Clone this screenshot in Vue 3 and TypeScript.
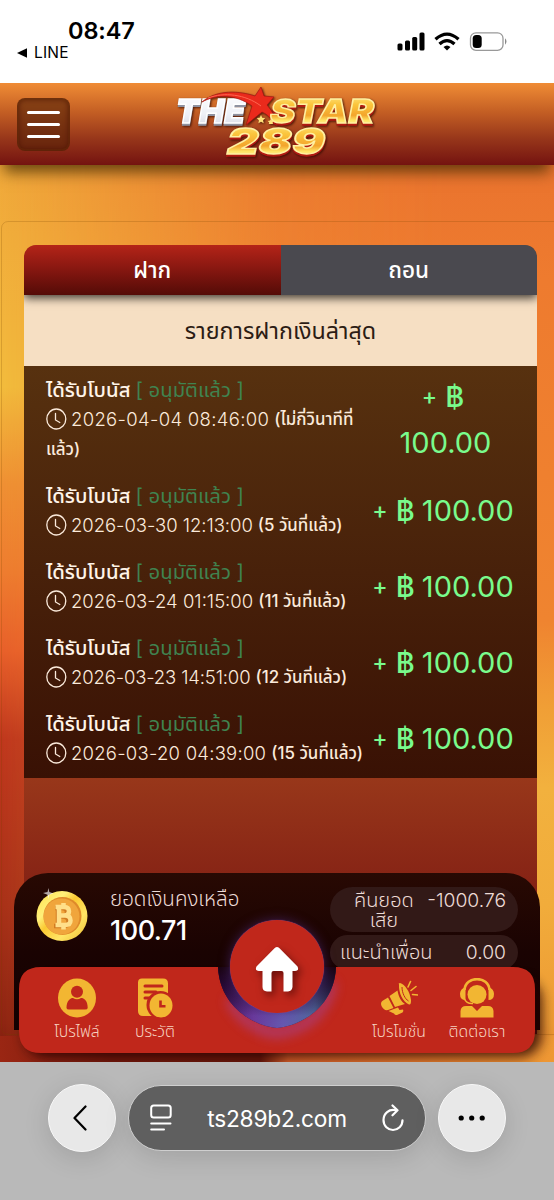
<script setup lang="ts">
interface Deposit {
  stamp: string
  tracking: number
  ago: string
  agoRest?: string
}

const deposits: Deposit[] = [
  { stamp: '2026-04-04 08:46:00', tracking: 0.32, ago: '(ไม่กี่วินาทีที่', agoRest: 'แล้ว)' },
  { stamp: '2026-03-30 12:13:00', tracking: -0.05, ago: '(5 วันที่แล้ว)' },
  { stamp: '2026-03-24 01:15:00', tracking: 0, ago: '(11 วันที่แล้ว)' },
  { stamp: '2026-03-23 14:51:00', tracking: -0.15, ago: '(12 วันที่แล้ว)' },
  { stamp: '2026-03-20 04:39:00', tracking: 0.24, ago: '(15 วันที่แล้ว)' },
]
</script>

<template>
  <div class="phone" lang="th">
    <header class="status">
      <div class="status-left">
        <div class="clock">08:47</div>
        <div class="back-app">
          <svg width="11" height="10" viewBox="0 0 11 10"><path d="M0 5 L10 .3 V9.7 Z" fill="#000" /></svg>
          <span>LINE</span>
        </div>
      </div>
      <svg class="status-icons" width="112" height="22" viewBox="0 0 112 22">
        <rect x="0.500" y="12.500" width="5" height="7" rx="1.500" />
        <rect x="8" y="9.500" width="5" height="10" rx="1.500" />
        <rect x="15.200" y="6" width="5" height="13.500" rx="1.500" />
        <rect x="22.500" y="1.500" width="5" height="18" rx="1.500" />
        <g fill="none" stroke="#000" stroke-width="3.300">
          <path d="M38.500 8.300 Q50 -2 61.500 8.300" />
          <path d="M42.500 13 Q50 6.200 57.500 13" />
        </g>
        <path d="M46.500 16 Q50 13 53.500 16 L50 19.500 Z" />
        <rect x="73.500" y="1.800" width="32.500" height="17.600" rx="5.500" fill="none" stroke="#999" stroke-width="1.300" />
        <rect x="75.700" y="4" width="9" height="13" rx="3.500" />
        <path d="M108 7.300 Q111 10.500 108 13.700 Z" fill="#888" />
      </svg>
    </header>

    <main class="site">
      <div class="backdrop"><div class="backdrop-right"></div><div class="backdrop-floor"></div></div>

      <nav class="topbar">
        <button class="burger" aria-label="menu"><i></i><i></i><i></i></button>
        <svg class="logo" width="210" height="76" viewBox="0 0 210 76">
          <defs>
            <linearGradient id="gold" x1="0" y1="0" x2="0" y2="1">
              <stop offset="0" stop-color="#fff3a0" />
              <stop offset=".35" stop-color="#fbc53c" />
              <stop offset=".62" stop-color="#f3a52c" />
              <stop offset=".75" stop-color="#ffe566" />
              <stop offset="1" stop-color="#fffbd8" />
            </linearGradient>
            <linearGradient id="silver" x1="0" y1="0" x2="0" y2="1">
              <stop offset="0" stop-color="#fff" />
              <stop offset=".6" stop-color="#eef0f6" />
              <stop offset="1" stop-color="#d3d6e0" />
            </linearGradient>
          </defs>
          <g class="logo-text">
            <text class="steel" x="3" y="36.500" font-size="33" textLength="69" lengthAdjust="spacingAndGlyphs">THE</text>
            <path d="M29 16 C44 3 67 5 82 10 L88 1 L91 10 L101 11 L94 19 C99 25 103 31 104 40 C99 33 94 28 89 26 L73 39 L79 20 C63 8 43 8 29 16 Z" fill="#ea2a1c" stroke="#a41712" stroke-width=".7" />
            <path d="M35 12 C51 6 72 8 88 20" fill="none" stroke="#ff6650" stroke-width="1" />
            <text class="golden" x="97" y="36.500" font-size="33" textLength="104" lengthAdjust="spacingAndGlyphs">STAR</text>
            <text class="golden" x="54" y="67.500" font-size="36" textLength="98" lengthAdjust="spacingAndGlyphs">289</text>
            <path d="M88 29 l1.300 2.700 3 .4 -2.200 2.100 .6 3 -2.700-1.500 -2.600 1.500 .5-3 -2.200-2.100 3-.4Z M98 32.500 l1 2 2.300 .4 -1.700 1.500 .4 1.600 h-4.300 l.5-1.600 -1.500-1.500 2.300-.4Z" fill="#ffe27a" />
          </g>
        </svg>
      </nav>

      <section class="frame">
        <div class="card">
          <div class="tabs">
            <button class="tab active"><span>ฝาก</span></button>
            <button class="tab"><span>ถอน</span></button>
          </div>
          <h2 class="title"><span>รายการฝากเงินล่าสุด</span></h2>
          <ul class="list">
            <li v-for="d in deposits" :key="d.stamp" class="row">
              <div class="info">
                <div class="line head">
                  <span class="kind">ได้รับโบนัส</span>
                  <span class="state">[ อนุมัติแล้ว ]</span>
                </div>
                <div class="line when">
                  <svg class="clock-icon" width="21" height="22" viewBox="0 0 21 22" fill="none" stroke="#fbeadb" stroke-width="1.300" stroke-linecap="round">
                    <ellipse cx="10.300" cy="11" rx="9.500" ry="10" />
                    <path d="M9.500 5.500 V12 L13.800 14.500" />
                  </svg>
                  <span class="stamp" :style="{ letterSpacing: d.tracking + 'px' }">{{ d.stamp }}</span>
                  <span class="ago">{{ d.ago }}</span>
                </div>
                <div v-if="d.agoRest" class="line"><span class="ago">{{ d.agoRest }}</span></div>
              </div>
              <div class="amount" :class="{ stacked: d.agoRest }">
                <span class="sign"><small>+</small> <b>฿</b></span>
                <span class="sum">100.00</span>
              </div>
            </li>
          </ul>
        </div>
      </section>

      <aside class="dock">
        <div class="wallet">
          <svg class="coin" width="54" height="54" viewBox="0 0 54 54">
            <defs>
              <linearGradient id="rim" x1="0" y1="0" x2="1" y2="1">
                <stop offset="0" stop-color="#ffe04a" />
                <stop offset=".3" stop-color="#fff07a" />
                <stop offset=".45" stop-color="#fbc932" />
                <stop offset=".7" stop-color="#ffe566" />
                <stop offset="1" stop-color="#eebb2c" />
              </linearGradient>
            </defs>
            <ellipse cx="27" cy="28" rx="25.500" ry="25" fill="url(#rim)" />
            <circle cx="27.500" cy="28" r="19" fill="#df8a2a" />
            <circle cx="26.500" cy="28.500" r="18" fill="#f0a53c" />
            <g fill="none" stroke="#d27c22" stroke-width="4.500" transform="translate(-2 1)">
              <path d="M22 19 H29 Q34 19 34 23.300 Q34 27.500 29 27.500 H24 H30 Q35.500 27.500 35.500 32.500 Q35.500 37 30 37 H21 M25 19 V37" />
            </g>
            <g fill="none" stroke="#ffdf8a" stroke-width="4.500">
              <path d="M20.500 19 H29 Q34 19 34 23.300 Q34 27.500 29 27.500 H24 H30 Q35.500 27.500 35.500 32.500 Q35.500 37 30 37 H20.500 M24 19 V37" />
              <path d="M28.500 15 V18 M28.500 38 V41.500" />
            </g>
            <path d="M13.500 0 L14.300 4 L18.500 5.500 L14.300 6.800 L13.500 11 L12.500 6.800 L8 5 L12.500 4 Z" fill="#fff" opacity=".65" />
          </svg>
          <div class="balance">
            <span>ยอดเงินคงเหลือ</span>
            <strong>100.71</strong>
          </div>
          <div class="pills">
            <div class="pill tall">
              <span class="pill-name">คืนยอด<br />เสีย</span>
              <span class="pill-num">-1000.76</span>
            </div>
            <div class="pill">
              <span class="pill-name">แนะนำเพื่อน</span>
              <span class="pill-num">0.00</span>
            </div>
          </div>
        </div>

        <div class="menu">
          <svg class="menu-shape" width="554" height="108" viewBox="0 0 554 108">
            <defs>
              <linearGradient id="glow" x1="0" y1="0" x2="1" y2="0">
                <stop offset="0" stop-color="#3b1256" />
                <stop offset=".3" stop-color="#6a3a9c" />
                <stop offset=".55" stop-color="#6659b0" />
                <stop offset=".82" stop-color="#50669c" />
                <stop offset="1" stop-color="#2c2a50" />
              </linearGradient>
              <linearGradient id="notchfill" x1="0" y1="0" x2="0" y2="1">
                <stop offset="0" stop-color="#1a0410" />
                <stop offset=".3" stop-color="#1a0420" stop-opacity=".7" />
                <stop offset=".8" stop-color="#1a0420" stop-opacity="0" />
              </linearGradient>
              <filter id="soft" x="-40%" y="-40%" width="180%" height="180%"><feGaussianBlur stdDeviation="6" /></filter>
              <filter id="shade" x="-10%" y="-30%" width="120%" height="170%"><feGaussianBlur stdDeviation="6" /></filter>
              <clipPath id="inbar"><rect x="19" y="11" width="516" height="86" rx="22" /></clipPath>
            </defs>
            <rect x="24" y="22" width="518" height="79" rx="22" fill="#220400" opacity=".8" filter="url(#shade)" />
            <path d="M41 11 H218 C220 52 255 70 277 72 C300 70 334 52 336 11 H513 Q535 11 535 33 V75 Q535 97 513 97 H41 Q19 97 19 75 V33 Q19 11 41 11 Z" fill="#c0271b" />
            <g clip-path="url(#inbar)">
              <path d="M230 42 C240 64 256 74 277 77 C300 74 324 62 332 26" fill="none" stroke="#a04bb0" stroke-width="9" opacity=".6" filter="url(#soft)" />
            </g>
            <path d="M218 11 C220 52 255 70 277 72 C300 70 334 52 336 11 Z" fill="url(#glow)" />
            <path d="M218 11 C220 52 255 70 277 72 C300 70 334 52 336 11 Z" fill="url(#notchfill)" />
          </svg>
          <div class="items">
            <a class="item">
              <svg width="38" height="40" viewBox="0 0 38 40">
                <ellipse cx="19" cy="20" rx="19" ry="19.500" fill="#f2b632" />
                <circle cx="19" cy="13.700" r="6" fill="#c0271b" />
                <path d="M8.500 30 C8.500 22.500 12.500 20 15 20 Q19 22.500 23 20 C26 20 29.700 22.500 29.700 30 Q29.500 31.500 27 31.500 H11 Q8.700 31.500 8.500 30Z" fill="#c0271b" />
              </svg>
              <span>โปรไฟล์</span>
            </a>
            <a class="item">
              <svg width="38" height="40" viewBox="0 0 38 40">
                <path d="M6 .5 H27 Q32 .5 32 5.500 V17 H20 L17 33 L19 38 H7 Q2 38 2 33 V4.500 Q2 .5 6 .5Z" fill="#f2b632" />
                <path d="M9 8 H26 M9 14 H20 M9 20 H15" stroke="#c0271b" stroke-width="3" stroke-linecap="round" />
                <circle cx="24.500" cy="27" r="14" fill="#c0271b" />
                <ellipse cx="25" cy="27.500" rx="11.500" ry="12" fill="#f2b632" />
                <path d="M24.500 22.500 V28.300 H29.500" stroke="#c0271b" stroke-width="2.600" fill="none" />
              </svg>
              <span>ประวัติ</span>
            </a>
            <span class="gap"></span>
            <a class="item">
              <svg width="38" height="40" viewBox="0 0 38 40">
                <g fill="#f2b632">
                  <path d="M19 6.500 Q18 5 20 5 C25 6 30 14 31 22 Q31.200 27 29 26.500 C23 24 18.500 15 19 6.500Z" />
                  <path d="M17.500 12.500 C18.500 19 21.500 24 25 26 L15 29 L9.500 18 Z" />
                  <path d="M8 19.500 L13.500 30 L8 32 Q4 33 1.500 28 Q0 24 3 22.500 Z" />
                  <path d="M8.500 33 L18 29.500 L19.500 32 L23 31.500 Q24 33 22.500 34.500 L17 37 Q15 37.500 14 35.500 Z" />
                </g>
                <path d="M22 9 C22 15 25 21 28.500 23" stroke="#c0271b" stroke-width="1" fill="none" />
                <path d="M28 9 L30.500 3.500 M31 12.500 L36 8.500 M32.500 16.500 L38 17" stroke="#f2b632" stroke-width="1.600" stroke-linecap="round" />
              </svg>
              <span>โปรโมชั่น</span>
            </a>
            <a class="item">
              <svg width="38" height="40" viewBox="0 0 38 40">
                <circle cx="19" cy="16.500" r="9.500" fill="#f2b632" />
                <path d="M6.500 12 C7.500 -2.500 30.500 -2.500 31.500 12" fill="none" stroke="#f2b632" stroke-width="2.600" />
                <path d="M7.500 9 V22 Q2 22 2 16 Q2 11 7.500 9Z M30.500 9 V22 Q36 22 36 16 Q36 11 30.500 9Z" fill="#f2b632" />
                <path d="M6.500 21 Q8.500 26 15 25.500" stroke="#f2b632" stroke-width="1.500" fill="none" />
                <path d="M2.500 39.500 V33 Q3 28 8 28 H14 L19 33 L24 28 H30 Q35 28 35.500 33 V39.500 Z" fill="#f2b632" />
              </svg>
              <span>ติดต่อเรา</span>
            </a>
          </div>
        </div>

        <button class="home" aria-label="home">
          <svg width="44" height="46" viewBox="0 0 44 46">
            <path d="M20 1.800 Q22 0 24 1.800 L42.500 20.500 Q44.500 24.500 40 25 H37.500 V41 Q37 45 33 45.500 H28.500 V27 Q28.500 25 26.500 25 H18.500 Q16.500 25 16.500 27 V45.500 H12 Q7.500 45 7.500 41 V25 H4 Q-.5 24.500 1.500 20.500 Z" fill="#fff" />
          </svg>
        </button>
      </aside>
    </main>

    <footer class="browser">
      <button class="round" aria-label="back">
        <svg class="chevron" width="14" height="26" viewBox="0 0 14 26"><path d="M12.500 1.500 L1.500 13 L12.500 24.500" fill="none" stroke="#000" stroke-width="2.200" stroke-linecap="round" stroke-linejoin="round" /></svg>
      </button>
      <div class="address">
        <svg width="22" height="28" viewBox="0 0 22 28" fill="none" stroke="#fff" stroke-width="2" stroke-linecap="round">
          <rect x="1.200" y="1.500" width="19.500" height="12" rx="2.500" />
          <path d="M1.200 19.500 H20.500 M1.200 25.500 H14" />
        </svg>
        <span class="url">ts289b2.com</span>
        <svg width="22" height="28" viewBox="0 0 22 28" fill="none" stroke="#fff" stroke-width="2.200" stroke-linecap="round" stroke-linejoin="round">
          <path d="M14 6.300 C7 4.500 1.500 9.500 1.500 16 C1.500 22 6 26 11 26 C16 26 20.500 22 20.500 16.300" />
          <path d="M10.500 1.500 L15.500 6.300 L10.500 11.300" />
        </svg>
      </div>
      <button class="round" aria-label="more">
        <svg width="28" height="6" viewBox="0 0 28 6"><circle cx="3.200" cy="3" r="2.600" /><circle cx="13.700" cy="3" r="2.600" /><circle cx="24.200" cy="3" r="2.600" /></svg>
      </button>
    </footer>
  </div>
</template>

<style>
body {
  margin: 0;
  background: #fff;
}
</style>

<style scoped>
.phone {
  width: 554px;
  height: 1200px;
  overflow: hidden;
  display: flex;
  flex-direction: column;
  font-family: Inter, "Noto Sans Thai", sans-serif;
  background: #fff;
}
.phone span,
.phone strong {
  white-space: nowrap;
}
button {
  border: 0;
  padding: 0;
  font: inherit;
  color: inherit;
}

.status {
  height: 83px;
  box-sizing: border-box;
  padding: 18px 45px 0 17px;
  display: flex;
  justify-content: space-between;
}
.clock {
  font-size: 23.5px;
  line-height: 26px;
  font-weight: 600;
  padding-left: 51px;
  letter-spacing: -0.1px;
}
.back-app {
  display: flex;
  align-items: center;
  gap: 6px;
  font-size: 15.5px;
  line-height: 17px;
  letter-spacing: 0.2px;
}
.status-icons {
  margin-top: 13px;
}

.site {
  position: relative;
  height: 979px;
  flex: none;
  overflow: hidden;
}
.backdrop,
.backdrop-right {
  position: absolute;
  inset: 0;
}
.backdrop {
  background: linear-gradient(#f0a83a 8%, #f2b53c 24%, #f2bc3c 31%, #ef9033 41%, #ee7c2f 50%, #e8602a 58%, #bf371d 67%, #b6341b 74%, #a83018 84%, #8e2412 96%, #7a1c0d);
}
.backdrop-right {
  background: linear-gradient(#ea732e 8%, #ee7b2f 20%, #ef802f 40%, #ef8430 55%, #f09f36 64%, #f2b13e 72%, #f1ac3b 84%, #ee9a34 96%, #e8882e);
  mask-image: linear-gradient(to right, transparent, rgba(0, 0, 0, 0.85) 50%, #000 80%);
}
.backdrop-floor {
  position: absolute;
  inset: auto 0 0;
  height: 26px;
  background: linear-gradient(to right, #9a2613, #75190c 20%, #6a180b 47%, #d8612a 52%, #e67c2e 75%, #ee9834);
}

.topbar {
  position: relative;
  height: 82px;
  box-sizing: border-box;
  padding: 0 17px;
  display: flex;
  align-items: center;
  background: linear-gradient(#f08c35, #c45f24 35%, #97361a 68%, #741310);
  box-shadow: 0 11px 14px -4px rgba(60, 40, 0, 0.75);
}
.burger {
  width: 53px;
  height: 53px;
  border: 2px solid rgba(90, 35, 5, 0.55);
  border-radius: 8px;
  background: rgba(85, 35, 8, 0.62);
  box-shadow: inset 0 0 5px rgba(70, 15, 0, 0.6);
  display: flex;
  flex-direction: column;
  align-items: center;
  justify-content: center;
  gap: 9px;
}
.burger i {
  width: 33px;
  height: 3px;
  border-radius: 2px;
  background: #fff;
}
.logo {
  margin-left: 103px;
}
.logo-text {
  font-family: Inter, sans-serif;
  font-weight: 900;
  font-style: italic;
  filter: drop-shadow(1px 1px 1px rgba(50, 10, 0, 0.8));
}
.steel {
  fill: url(#silver);
  stroke: #fff;
  stroke-width: 1.4px;
  filter: drop-shadow(0 2px 0 #8f92a0);
}
.golden {
  fill: url(#gold);
  stroke: #fff0a0;
  stroke-width: 1.4px;
  filter: drop-shadow(0 2px 0 #b21a12);
}

.frame {
  position: relative;
  box-sizing: border-box;
  height: 814px;
  margin: 56px 0 0 1px;
  width: 570px;
  padding: 23px 0 0 22px;
  border: 1.5px solid rgba(120, 70, 0, 0.22);
  border-radius: 7px;
}
.card {
  width: 513px;
  height: 789px;
  border-radius: 12px 12px 0 0;
  background: linear-gradient(rgba(90, 45, 20, 0.3), #98371a 533px, #862315 640px, #741a10);
  overflow: hidden;
}
.tabs {
  position: relative;
  display: flex;
  height: 50px;
  box-shadow: 0 3px 9px rgba(0, 0, 0, 0.75);
}
.tab {
  flex: 1;
  padding-top: 2px;
  background: #4a494f;
  color: #fff;
  font-size: 22.5px;
  font-weight: 500;
}
.tab.active {
  background: linear-gradient(#b42418, #8a1811 45%, #540b07);
}
.title {
  margin: 0;
  height: 71px;
  background: #f6dfc3;
  color: #2c1c14;
  font-weight: 400;
  font-size: 23.3px;
  line-height: 72px;
  text-align: center;
}
.list {
  margin: 0;
  list-style: none;
  height: 412px;
  box-sizing: border-box;
  padding: 9px 20px 0 22px;
  display: flex;
  flex-direction: column;
  gap: 17px;
  background: linear-gradient(#57310f, #48210a 50%, #391104);
}
.row {
  display: flex;
  justify-content: space-between;
  height: 59px;
}
.row:first-child {
  height: 89px;
}
.info {
  color: #fbeadb;
}
.line {
  display: flex;
  align-items: center;
  height: 30px;
}
.head {
  gap: 5px;
  font-size: 20.3px;
}
.kind {
  color: #fff4e8;
  font-weight: 500;
}
.state {
  color: #408350;
}
.when {
  margin-top: -1px;
}
.clock-icon {
  margin-right: 4px;
}
.stamp {
  font-size: 18.5px;
  font-weight: 300;
  margin-right: 5px;
}
.ago {
  font-size: 16.9px;
  font-weight: 500;
  padding-top: 2px;
}
.amount {
  width: 148px;
  display: flex;
  align-items: center;
  justify-content: center;
  gap: 7px;
  color: #79fb8c;
  font-size: 29px;
}
.amount.stacked {
  flex-direction: column;
  gap: 0;
  line-height: 44px;
}
.stacked .sum {
  padding-left: 5px;
}
.amount small {
  font-size: 23px;
  font-weight: 500;
  position: relative;
  top: -2px;
}
.amount b {
  font-weight: 500;
}

.dock {
  position: absolute;
  left: 0;
  bottom: 0;
  width: 554px;
  height: 189px;
}
.wallet {
  margin: 0 14px;
  height: 157px;
  box-sizing: border-box;
  padding: 14px 22px 0 21px;
  border-radius: 34px 34px 0 0;
  background: linear-gradient(#280903, #1a0302 50%, #140202);
  display: flex;
  align-items: flex-start;
}
.coin {
  margin-top: 1px;
}
.balance {
  margin-left: 21px;
  width: 200px;
  display: flex;
  flex-direction: column;
  color: #eddbd6;
  font-size: 20.6px;
  line-height: 24px;
  font-weight: 300;
}
.balance strong {
  margin-top: 3px;
  color: #fff;
  font-weight: 500;
  font-size: 27px;
  line-height: 34px;
  letter-spacing: -0.5px;
}
.pills {
  margin-left: 20px;
  width: 188px;
  flex: none;
}
.pill {
  height: 35px;
  box-sizing: border-box;
  padding: 6px 12px 0 10px;
  border-radius: 18px;
  background: #321917;
  display: flex;
  justify-content: space-between;
  color: #eddbd6;
  font-size: 20px;
  line-height: 22px;
  font-weight: 300;
}
.pill.tall {
  height: 45px;
  padding-top: 3px;
  padding-left: 24px;
  margin-bottom: 3px;
  border-radius: 23px;
  line-height: 20px;
}
.pill-name {
  text-align: center;
}
.pill-num {
  font-size: 19.3px;
}
.menu {
  position: absolute;
  left: 0;
  bottom: 0;
  width: 554px;
  height: 106px;
}
.menu-shape {
  display: block;
}
.items {
  position: absolute;
  inset: 22px 0 auto;
  padding: 0 38px;
  display: flex;
}
.item {
  width: 78px;
  display: flex;
  flex-direction: column;
  align-items: center;
  color: #f7d3c0;
  font-size: 15.8px;
  line-height: 27px;
  font-weight: 300;
}
.gap {
  flex: 1;
}
.home {
  position: absolute;
  left: 230px;
  top: 47px;
  width: 94px;
  height: 93px;
  border-radius: 50%;
  background: #c0271b;
  box-shadow: 0 0 1px #7a55b5, 0 0 12px rgba(80, 45, 130, 0.6);
  display: flex;
  align-items: center;
  justify-content: center;
}
.home svg {
  margin-top: 4px;
  filter: drop-shadow(3px 4px 4px rgba(50, 0, 0, 0.6));
}

.browser {
  flex: 1;
  box-sizing: border-box;
  padding: 22px 48px 0;
  display: flex;
  align-items: flex-start;
  justify-content: space-between;
  background: #b9b9b9;
}
.round {
  width: 68px;
  height: 68px;
  box-sizing: border-box;
  border-radius: 50%;
  border: 1.5px solid #f8f8f8;
  background: #e8e8e8;
  display: flex;
  align-items: center;
  justify-content: center;
  box-shadow: 0 6px 26px rgba(0, 0, 0, 0.13);
}
.chevron {
  margin-right: 5px;
}
.address {
  margin-top: 1px;
  width: 298px;
  height: 66px;
  box-sizing: border-box;
  padding: 0 21px;
  border-radius: 33px;
  border: 1px solid #cfcfcf;
  background: #5f5f5f;
  color: #fff;
  display: flex;
  align-items: center;
  justify-content: space-between;
  box-shadow: 0 6px 26px rgba(0, 0, 0, 0.13);
}
.url {
  font-size: 22.7px;
  letter-spacing: -0.2px;
}
</style>
